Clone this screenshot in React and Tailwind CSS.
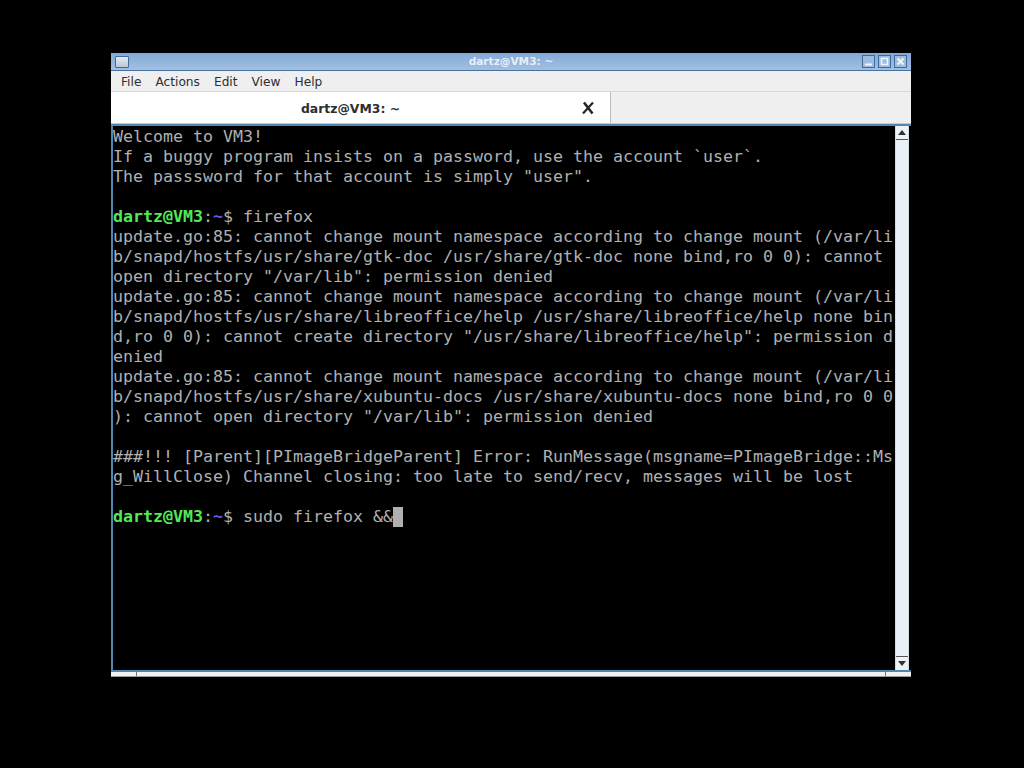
const lines = [
  "Welcome to VM3!",
  "If a buggy program insists on a password, use the account `user`.",
  'The passsword for that account is simply "user".',
  "",
  { cmd: "firefox" },
  "update.go:85: cannot change mount namespace according to change mount (/var/li",
  "b/snapd/hostfs/usr/share/gtk-doc /usr/share/gtk-doc none bind,ro 0 0): cannot",
  'open directory "/var/lib": permission denied',
  "update.go:85: cannot change mount namespace according to change mount (/var/li",
  "b/snapd/hostfs/usr/share/libreoffice/help /usr/share/libreoffice/help none bin",
  'd,ro 0 0): cannot create directory "/usr/share/libreoffice/help": permission d',
  "enied",
  "update.go:85: cannot change mount namespace according to change mount (/var/li",
  "b/snapd/hostfs/usr/share/xubuntu-docs /usr/share/xubuntu-docs none bind,ro 0 0",
  '): cannot open directory "/var/lib": permission denied',
  "",
  "###!!! [Parent][PImageBridgeParent] Error: RunMessage(msgname=PImageBridge::Ms",
  "g_WillClose) Channel closing: too late to send/recv, messages will be lost",
  "",
  { cmd: "sudo firefox &&", cursor: true },
];

const Prompt = () => (
  <>
    <span className="font-bold text-[#55e855]">dartz@VM3</span>
    <span>:</span>
    <span className="font-bold text-[#5c5cf0]">~</span>
    <span>$ </span>
  </>
);

const WinButton = ({ children }) => (
  <div className="w-[13px] h-[13px] border border-[#3f6a9c] bg-[#9dbde0] flex items-center justify-center">
    <svg className="w-[11px] h-[11px]" viewBox="0 0 11 11" fill="none" stroke="#f2f5f9" strokeWidth="2">
      {children}
    </svg>
  </div>
);

export default function App() {
  return (
    <div className="w-[1024px] h-[768px] bg-black pt-[53px] pl-[111px] overflow-hidden font-['DejaVu_Sans',sans-serif]">
      <div className="w-[800px] h-[624px] flex flex-col bg-[#efefef]">
        {/* Title bar */}
        <div className="h-[18px] shrink-0 flex items-center justify-between px-[4px] bg-gradient-to-b from-[#82a9d6] to-[#a3c0e2] border-b border-[#4a729f]">
          <div className="w-[45px]">
            <div className="w-[14px] h-[12px] rounded-[1px] border border-[#3f6a9c] bg-gradient-to-b from-[#e6ecf3] to-[#b9c8da]" />
          </div>
          <span className="text-[10.6px] font-bold text-[#e8eef6]">dartz@VM3: ~</span>
          <div className="w-[45px] flex gap-[3px]">
            <WinButton><path d="M2 8.5h7" /></WinButton>
            <WinButton><path d="M2.5 2.5h6v6h-6z" strokeWidth="1.5" /></WinButton>
            <WinButton><path d="M2.5 2.5l6 6M8.5 2.5l-6 6" /></WinButton>
          </div>
        </div>

        {/* Menu bar */}
        <div className="h-[21px] shrink-0 flex items-center gap-[14px] pl-[10px] pt-[2px] text-[12.2px] text-[#2e2e2e] border-b border-[#d8d8d8]">
          <span>File</span>
          <span>Actions</span>
          <span>Edit</span>
          <span>View</span>
          <span>Help</span>
        </div>

        {/* Tab bar */}
        <div className="h-[32px] shrink-0 flex bg-[#efefef] border-b border-[#c8c8c8]">
          <div className="w-[500px] h-[31px] bg-white border-r border-[#bdbdbd] flex items-center justify-between pl-[190px] pr-[15px] pt-[3px]">
            <span className="text-[12.4px] font-bold text-[#2e2e2e]">dartz@VM3: ~</span>
            <svg className="w-[14px] h-[14px] -mt-[2px]" viewBox="0 0 14 14" fill="none" stroke="#262626">
              <path d="M3 1.5l8.5 11" strokeWidth="2.6" />
              <path d="M12 1.5L2 12.5" strokeWidth="2.2" />
            </svg>
          </div>
        </div>

        {/* Terminal */}
        <div className="h-[548px] shrink-0 flex border-2 border-[#4f87b0] border-r-0 bg-black overflow-hidden">
          <div className="w-[782px] shrink-0 pt-px font-['DejaVu_Sans_Mono',monospace] text-[16.62px] leading-[20px] text-[#b0b0b0] whitespace-pre overflow-hidden">
            {lines.map((line, i) => (
              <div key={i} className="h-5 flex">
                {typeof line === "string" ? line : (
                  <>
                    <Prompt />
                    <span>{line.cmd}</span>
                    {line.cursor && <span className="w-[10px] h-5 bg-[#b0b0b0]" />}
                  </>
                )}
              </div>
            ))}
          </div>
          <div className="w-[14px] ml-auto mr-[2px] flex flex-col bg-[#eaf0f7] border-x border-[#d5dbe2]">
            <div className="h-[14px] border-b border-[#555] flex items-center justify-center bg-[#eef2f6]">
              <svg className="w-[8px] h-[5px]" viewBox="0 0 10 6"><path d="M5 0l5 6H0z" fill="#333" /></svg>
            </div>
            <div className="flex-1" />
            <div className="h-[14px] border-t border-[#555] flex items-center justify-center bg-[#eef2f6]">
              <svg className="w-[8px] h-[5px]" viewBox="0 0 10 6"><path d="M0 0h10L5 6z" fill="#333" /></svg>
            </div>
          </div>
        </div>

        {/* Bottom resize grip */}
        <div className="h-[5px] shrink-0 flex bg-[#f2f2f2] border-b border-[#9a9a9a]">
          <div className="w-[26px] border-r border-[#777]" />
          <div className="flex-1" />
          <div className="w-[26px] border-l border-[#777]" />
        </div>
      </div>
    </div>
  );
}
